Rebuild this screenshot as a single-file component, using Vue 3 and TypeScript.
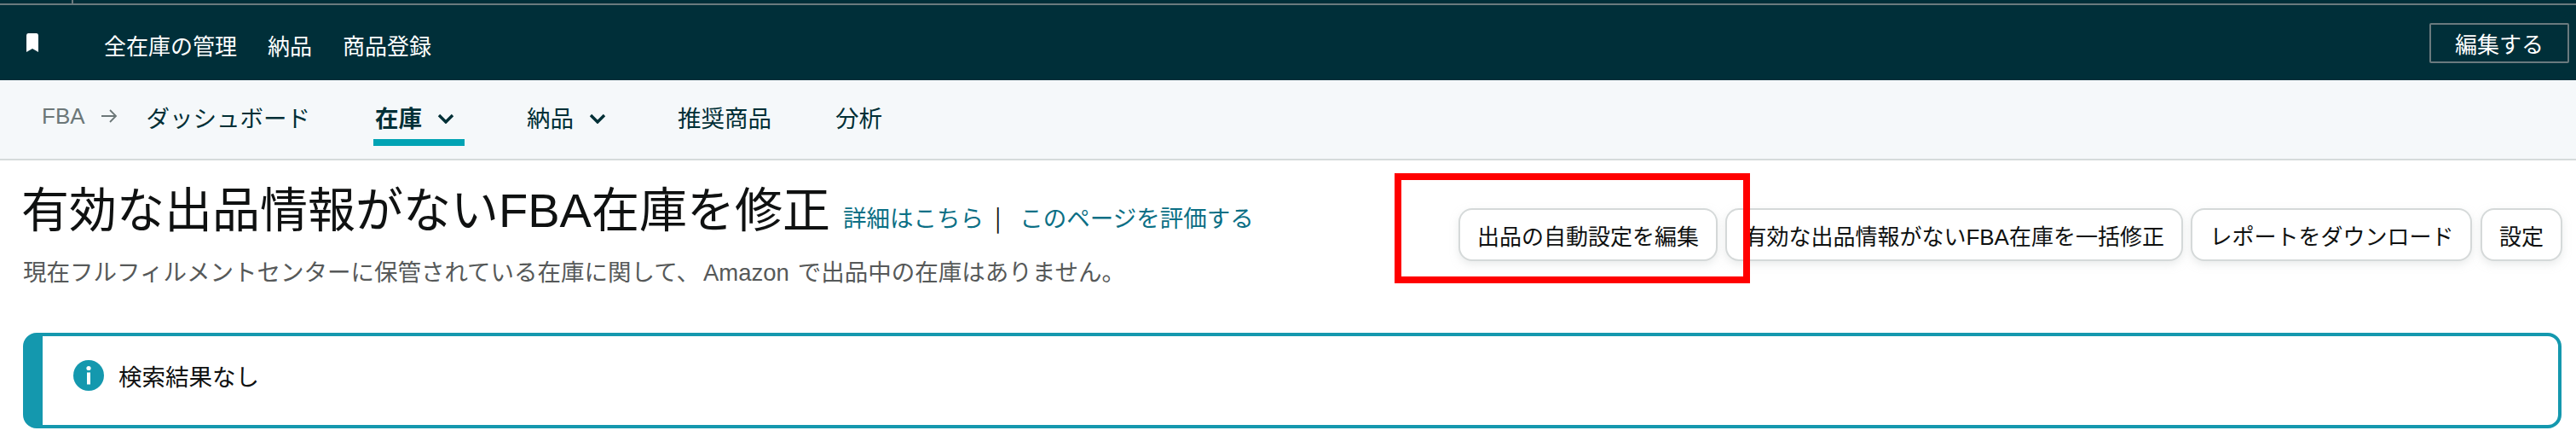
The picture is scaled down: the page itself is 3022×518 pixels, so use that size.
<script setup lang="ts">
const topLinks: string[] = ['全在庫の管理', '納品', '商品登録']
const actions: string[] = ['出品の自動設定を編集', '有効な出品情報がないFBA在庫を一括修正', 'レポートをダウンロード', '設定']
</script>

<template>
  <div class="page">
    <header class="topbar">
      <div class="stripe"><i class="tick"></i></div>
      <div class="toprow">
        <svg class="bookmark" viewBox="0 0 16 22"><path d="M1 2.5Q1 0 3 0H13Q15 0 15 2.5V22L8 18L1 22Z" fill="#fff" /></svg>
        <nav class="toplinks">
          <a v-for="l in topLinks" :key="l" class="toplink">{{ l }}</a>
        </nav>
        <button class="editbtn">編集する</button>
      </div>
    </header>

    <nav class="subnav">
      <span class="fba">FBA</span>
      <svg class="arrow" viewBox="0 0 20 20"><path d="M1 10H18M11 3L18 10L11 17" fill="none" stroke="#6c7778" stroke-width="1.8" /></svg>
      <a class="tab dash">ダッシュボード</a>
      <a class="tab active">在庫
        <svg class="chev" viewBox="0 0 20 12"><path d="M2 2L10 10L18 2" fill="none" stroke="#002f36" stroke-width="3.4" /></svg>
      </a>
      <a class="tab nouhin">納品
        <svg class="chev" viewBox="0 0 20 12"><path d="M2 2L10 10L18 2" fill="none" stroke="#002f36" stroke-width="3.4" /></svg>
      </a>
      <a class="tab rec">推奨商品</a>
      <a class="tab">分析</a>
    </nav>

    <main class="content">
      <div class="head">
        <div class="headleft">
          <div class="titlerow">
            <h1 class="title">有効な出品情報がないFBA在庫を修正</h1>
            <a class="link first">詳細はこちら</a>
            <span class="sep">|</span>
            <a class="link">このページを評価する</a>
          </div>
          <p class="desc">現在フルフィルメントセンターに保管されている在庫に関して、<span class="brand">Amazon</span>で出品中の在庫はありません。</p>
        </div>
        <div class="actions">
          <button v-for="a in actions" :key="a" class="action">{{ a }}</button>
        </div>
      </div>

      <div class="alert">
        <svg class="info" viewBox="0 0 36 36">
          <circle cx="18" cy="18" r="18" fill="#1498ae" />
          <circle cx="18" cy="9.5" r="2.6" fill="#fff" />
          <rect x="16" y="14.5" width="4" height="14" fill="#fff" />
        </svg>
        <span>検索結果なし</span>
      </div>
    </main>

    <div class="redbox"></div>
  </div>
</template>

<style>
html, body { margin: 0; background: #fff; }
</style>

<style scoped>
.page {
  position: relative;
  width: 3022px;
  height: 518px;
  overflow: hidden;
  background: #fff;
  font-family: "Noto Sans CJK JP", "Liberation Sans", sans-serif;
  font-weight: 400;
  color: #0f1111;
}
.topbar { background: #002f39; height: 94px; }
.stripe { position: relative; height: 4px; border-bottom: 2px solid #6a7a7e; }
.tick { position: absolute; left: 84px; top: 0; width: 2px; height: 4px; background: #6a7a7e; }
.toprow { display: flex; align-items: center; height: 88px; padding: 0 8px 0 30px; }
.bookmark { width: 16px; height: 22px; }
.toplinks { display: flex; gap: 36px; margin-left: 76px; margin-top: 6px; flex: 1; }
.toplink { font-size: 26px; line-height: 36px; color: #fff; }
.editbtn {
  width: 164px;
  height: 47px;
  background: transparent;
  border: 2px solid #6a7a7e;
  border-radius: 2px;
  color: #fff;
  font: inherit;
  font-size: 26px;
  padding: 0;
}
.subnav {
  display: flex;
  align-items: flex-start;
  height: 92px;
  background: #f5f8fa;
  border-bottom: 2px solid #d5dbdb;
  padding-left: 49px;
  box-sizing: content-box;
}
.fba { margin-top: 24px; font-family: "Liberation Sans", sans-serif; font-size: 26px; line-height: 36px; color: #6c7778; }
.arrow { width: 20px; height: 20px; margin: 32px 0 0 18px; }
.tab {
  display: flex;
  align-items: center;
  height: 50px;
  margin-top: 18px;
  font-size: 27.5px;
  line-height: 36px;
  color: #002f36;
  white-space: nowrap;
}
.dash { margin-left: 34px; margin-right: 76px; }
.active {
  font-weight: 700;
  margin-right: 73px;
  position: relative;
  padding-right: 12px;
  padding-left: 2px;
  margin-left: -2px;
}
.active::after {
  content: "";
  position: absolute;
  left: 0;
  right: 0;
  top: 51px;
  height: 8px;
  background: #00a3b4;
}
.nouhin { margin-right: 84px; }
.rec { margin-right: 75px; }
.chev { width: 20px; height: 12px; margin-left: 18px; margin-top: 4px; }
.content { padding: 0 16px 0 27px; }
.head { display: flex; justify-content: space-between; height: 202px; }
.headleft { margin-left: -2px; }
.titlerow { display: flex; align-items: baseline; padding-top: 21px; }
.title { margin: 0; font-family: "Liberation Sans", "Noto Sans CJK JP", sans-serif; font-size: 56px; line-height: 76px; font-weight: 400; color: #0f1111; white-space: nowrap; }
.link { font-size: 27.5px; color: #0b6f85; white-space: nowrap; }
.first { margin-left: 15px; }
.sep { margin: 0 22px 0 13px; font-size: 27.5px; color: #0f1111; }
.desc { margin: 15px 0 0 2px; font-family: "Liberation Sans", "Noto Sans CJK JP", sans-serif; font-size: 27.5px; line-height: 40px; color: #565959; white-space: nowrap; }
.brand { margin: 0 10px 0 4px; }
.actions { display: flex; gap: 9.5px; padding-top: 56px; align-items: flex-start; }
.action {
  height: 62px;
  padding: 0 20px;
  background: #fff;
  border: 2px solid #d5d9d9;
  border-radius: 16px;
  box-shadow: 0 4px 10px rgba(213, 217, 217, 0.5);
  font-family: "Liberation Sans", "Noto Sans CJK JP", sans-serif;
  font-weight: 400;
  font-size: 26px;
  color: #0f1111;
  white-space: nowrap;
}
.alert {
  display: flex;
  align-items: center;
  gap: 17px;
  height: 112px;
  box-sizing: border-box;
  margin-right: 1px;
  border: 4px solid #1498ae;
  border-left-width: 23px;
  border-radius: 16px;
  padding: 0 0 12px 36px;
  font-size: 27.5px;
}
.info { width: 36px; height: 36px; }
.redbox {
  position: absolute;
  left: 1636px;
  top: 203px;
  width: 417px;
  height: 129px;
  box-sizing: border-box;
  border: 8px solid #ff0000;
  pointer-events: none;
}
</style>
